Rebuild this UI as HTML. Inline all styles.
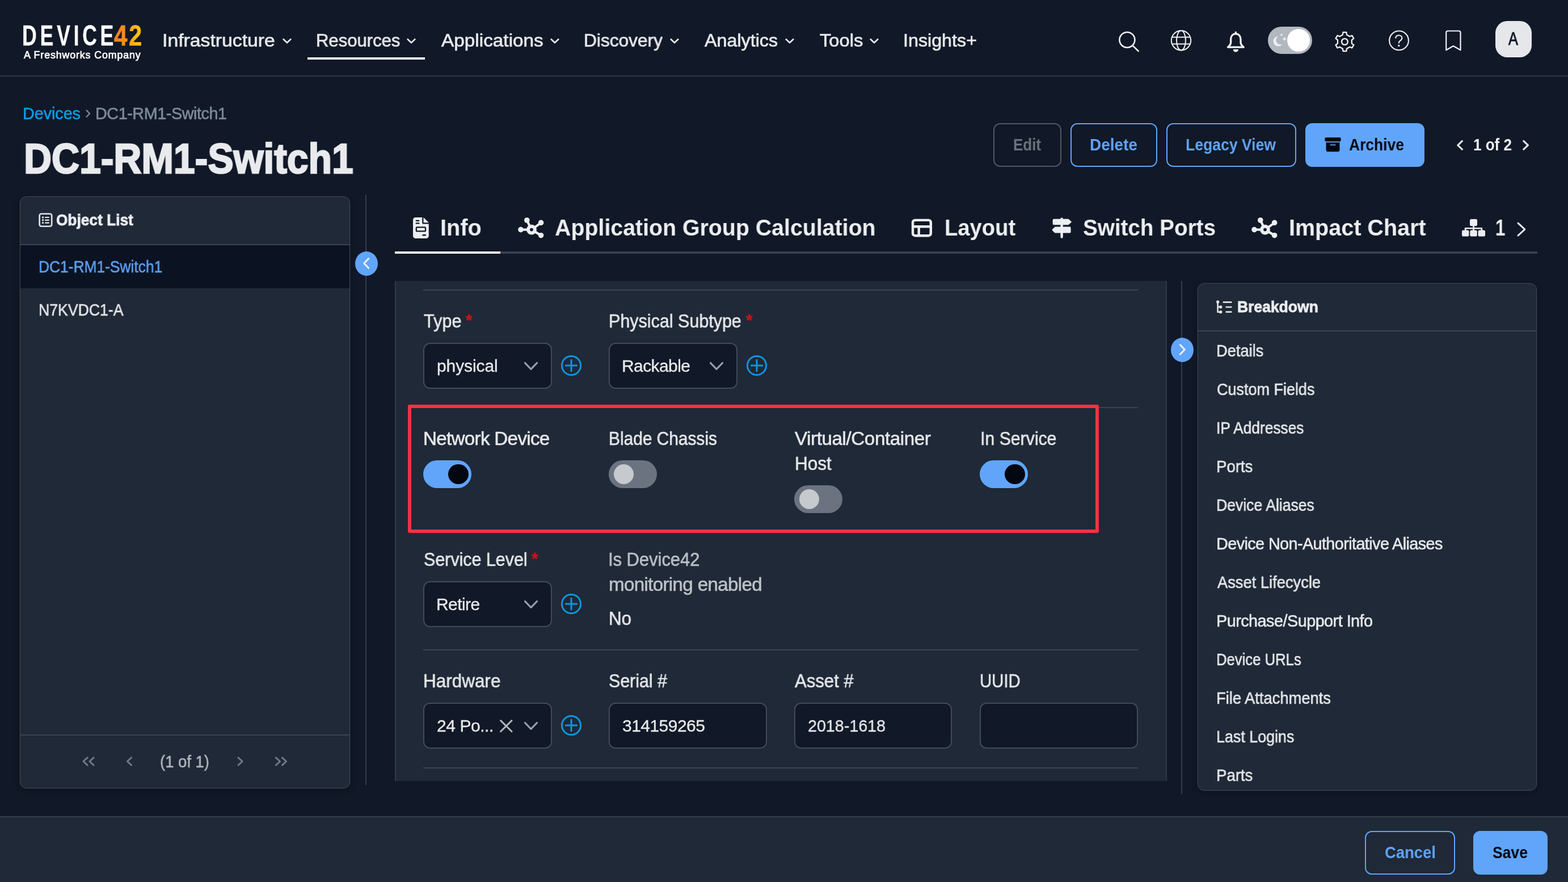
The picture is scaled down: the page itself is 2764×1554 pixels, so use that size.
<!DOCTYPE html>
<html lang="en"><head><meta charset="utf-8"><title>DC1-RM1-Switch1 - Device42</title>
<style>
html,body{margin:0;padding:0;background:#111827;}
body{width:2764px;height:1554px;position:relative;overflow:hidden;font-family:"Liberation Sans",sans-serif;color:#e1e3e6;}
body *{position:absolute;box-sizing:border-box;margin:0;padding:0;}
.t{white-space:nowrap;line-height:1;display:block;will-change:transform;}
svg{overflow:visible;}
.panel{background:#1f2937;border:1px solid #3a4453;border-radius:12px;box-shadow:0 0 0 1px rgba(55,65,81,.35),0 2px 8px 2px rgba(0,0,0,.25);}
button{font-family:inherit;font-size:inherit;color:inherit;cursor:pointer;}
.btn{border-radius:12px;border:2px solid #60a5fa;background:transparent;}
.inp{background:#111827;border:2px solid #424b57;border-radius:12px;}
.hr{height:2px;background:#3a4452;}
.sw{border-radius:25px;}
.sw i{border-radius:50%;}
</style></head><body>
<header style="left:0;top:0;width:2764px;height:135px;border-bottom:2px solid #2f3745;"><a class="logo" style="left:0;top:0;width:260px;height:120px;"><span class="t" style="left:38.99px;top:38.74px;font-size:49.60px;color:#ffffff;font-weight:700;transform:scaleX(0.7186);transform-origin:0 0;letter-spacing:8.00px;-webkit-text-stroke:0.30px #ffffff;">DEVICE</span><span class="t" style="left:200.80px;top:37.75px;font-size:50.00px;color:#f7931e;font-weight:700;transform:scaleX(0.8414);transform-origin:0 0;letter-spacing:3.00px;-webkit-text-stroke:0.40px #f7931e;-webkit-text-stroke:0.4px #f99d1c;background:linear-gradient(90deg,#f47c20 0%,#f7941d 45%,#fdb913 70%,#ffc90e 100%);-webkit-background-clip:text;background-clip:text;-webkit-text-fill-color:transparent;">42</span><span class="t" style="left:41.55px;top:88.91px;font-size:17.80px;color:#ffffff;letter-spacing:0.888px;-webkit-text-stroke:0.70px #ffffff;">A Freshworks Company</span></a><nav style="left:270px;top:0;width:1500px;height:133px;"></nav><a class="t" style="left:286.44px;top:54.61px;font-size:32.00px;color:#e6e8eb;transform:scaleX(1.0546);transform-origin:0 0;-webkit-text-stroke:0.70px #e6e8eb;">Infrastructure</a><svg style="left:495.5px;top:62px;" width="20" height="20" viewBox="-10 -10 20 20"><path d="M-6.3 -2.8L0 3.3L6.3 -2.8" fill="none" stroke="#e6e8eb" stroke-width="2.7" stroke-linecap="round" stroke-linejoin="round"/></svg><a class="t" style="left:556.91px;top:54.61px;font-size:32.00px;color:#e6e8eb;transform:scaleX(0.9700);transform-origin:0 0;-webkit-text-stroke:0.70px #e6e8eb;">Resources</a><svg style="left:715px;top:62px;" width="20" height="20" viewBox="-10 -10 20 20"><path d="M-6.3 -2.8L0 3.3L6.3 -2.8" fill="none" stroke="#e6e8eb" stroke-width="2.7" stroke-linecap="round" stroke-linejoin="round"/></svg><a class="t" style="left:777.65px;top:54.61px;font-size:32.00px;color:#e6e8eb;transform:scaleX(1.0420);transform-origin:0 0;-webkit-text-stroke:0.70px #e6e8eb;">Applications</a><svg style="left:968px;top:62px;" width="20" height="20" viewBox="-10 -10 20 20"><path d="M-6.3 -2.8L0 3.3L6.3 -2.8" fill="none" stroke="#e6e8eb" stroke-width="2.7" stroke-linecap="round" stroke-linejoin="round"/></svg><a class="t" style="left:1029.47px;top:54.61px;font-size:32.00px;color:#e6e8eb;transform:scaleX(0.9890);transform-origin:0 0;-webkit-text-stroke:0.70px #e6e8eb;">Discovery</a><svg style="left:1178.5px;top:62px;" width="20" height="20" viewBox="-10 -10 20 20"><path d="M-6.3 -2.8L0 3.3L6.3 -2.8" fill="none" stroke="#e6e8eb" stroke-width="2.7" stroke-linecap="round" stroke-linejoin="round"/></svg><a class="t" style="left:1241.85px;top:54.61px;font-size:32.00px;color:#e6e8eb;transform:scaleX(1.0079);transform-origin:0 0;-webkit-text-stroke:0.70px #e6e8eb;">Analytics</a><svg style="left:1381.5px;top:62px;" width="20" height="20" viewBox="-10 -10 20 20"><path d="M-6.3 -2.8L0 3.3L6.3 -2.8" fill="none" stroke="#e6e8eb" stroke-width="2.7" stroke-linecap="round" stroke-linejoin="round"/></svg><a class="t" style="left:1444.55px;top:54.61px;font-size:32.00px;color:#e6e8eb;transform:scaleX(1.0223);transform-origin:0 0;-webkit-text-stroke:0.70px #e6e8eb;">Tools</a><svg style="left:1530.7px;top:62px;" width="20" height="20" viewBox="-10 -10 20 20"><path d="M-6.3 -2.8L0 3.3L6.3 -2.8" fill="none" stroke="#e6e8eb" stroke-width="2.7" stroke-linecap="round" stroke-linejoin="round"/></svg><a class="t" style="left:1591.63px;top:54.61px;font-size:32.00px;color:#e6e8eb;transform:scaleX(1.0077);transform-origin:0 0;-webkit-text-stroke:0.70px #e6e8eb;">Insights+</a><div style="left:542px;top:100.5px;width:207px;height:4.5px;background:#f3f4f6;"></div><svg style="left:1968px;top:50px;" width="46" height="46" viewBox="1968 50 46 46"><g fill="none" stroke="#f1f2f4" stroke-linecap="round" stroke-linejoin="round" stroke-width="2.6"><circle cx="1986.9" cy="70.2" r="13.5"/><path d="M1996.6 80.4L2006.6 90"/></g></svg><svg style="left:2060px;top:50px;" width="46" height="46" viewBox="2060 50 46 46"><g fill="none" stroke="#f1f2f4" stroke-linecap="round" stroke-linejoin="round" stroke-width="2"><circle cx="2082" cy="71.3" r="17.2"/><ellipse cx="2082" cy="71.3" rx="8" ry="17.2"/><path d="M2066.2 65.4H2097.8M2066.2 77.4H2097.8"/></g></svg><svg style="left:2156px;top:50px;" width="46" height="46" viewBox="2156 50 46 46"><g fill="none" stroke="#f1f2f4" stroke-linecap="round" stroke-linejoin="round" stroke-width="3.3"><path d="M2178.3 59.600c-5.600 0-8.700 4.300-8.700 9.800v5.600c0 2.600-1.600 4.800-3.800 6.800l-1.400 1.400h27.800l-1.400-1.400c-2.200-2-3.800-4.200-3.800-6.800v-5.600c0-5.500-3.100-9.800-8.700-9.800z"/><path d="M2178.300 58.400v-1.600"/></g><path d="M2173.600 87h9.400a4.700 4.700 0 0 1-9.400 0z" fill="#f1f2f4"/></svg><div class="sw" style="left:2235px;top:47px;width:78.4px;height:48px;background:#b3b7bf;border-radius:24px;"><i style="left:34px;top:3.800px;width:40.400px;height:40.400px;background:#ffffff;"></i><svg style="left:5px;top:9px;" width="30" height="30" viewBox="0 0 30 30"><path d="M13.200 8a8.800 8.800 0 1 0 7.600 13.400a7.600 7.600 0 0 1-7.600-13.400z" fill="#eceef1"/><path d="M19 2.600l.9 2 2 .9-2 .9-.9 2-.9-2-2-.9 2-.9z M24.200 8.400l1.200 2.900 2.900 1.200-2.900 1.200-1.200 2.900-1.200-2.900-2.900-1.200 2.900-1.200z" fill="#eceef1"/></svg></div><svg style="left:2348px;top:50px;" width="46" height="46" viewBox="2348 50 46 46"><g fill="none" stroke="#f1f2f4" stroke-linecap="round" stroke-linejoin="round" stroke-width="2.3"><path d="M2366.83 61.21L2367.41 56.87L2373.39 56.87L2373.97 61.21L2379.26 64.26L2383.31 62.59L2386.30 67.78L2382.83 70.45L2382.83 76.55L2386.30 79.22L2383.31 84.41L2379.26 82.74L2373.97 85.79L2373.39 90.13L2367.41 90.13L2366.83 85.79L2361.54 82.74L2357.49 84.41L2354.50 79.22L2357.97 76.55L2357.97 70.45L2354.50 67.78L2357.49 62.59L2361.54 64.26Z" stroke-linejoin="round"/><circle cx="2370.4" cy="73.5" r="5.400"/></g></svg><svg style="left:2443px;top:50px;" width="46" height="46" viewBox="2443 50 46 46"><g fill="none" stroke="#f1f2f4" stroke-linecap="round" stroke-linejoin="round" stroke-width="2.1"><circle cx="2466" cy="71.400" r="16.900"/><path d="M2460.200 66.800c.4-3 2.600-4.600 5.600-4.600 3.200 0 5.600 1.900 5.600 4.800 0 2.600-1.700 3.700-3.400 4.800-1.500 1-2.200 1.900-2.200 3.900"/></g><circle cx="2465.800" cy="80.400" r="1.700" fill="#f1f2f4"/></svg><svg style="left:2540px;top:50px;" width="46" height="46" viewBox="2540 50 46 46"><path d="M2549.200 57.500a3 3 0 0 1 3-3h19.300a3 3 0 0 1 3 3v30.800l-12.700-7.300-12.600 7.300z" fill="none" stroke="#f1f2f4" stroke-linecap="round" stroke-linejoin="round" stroke-width="2.2"/></svg><div style="left:2635.8px;top:37px;width:64.4px;height:64.2px;border-radius:21px;background:#e5e7eb;"><span class="t" style="left:22.90px;top:16.00px;font-size:31.60px;color:#111827;transform:scaleX(0.8000);transform-origin:0 0;-webkit-text-stroke:1.00px #111827;">A</span></div></header><main style="left:0;top:135px;width:2764px;height:1303px;"></main><a class="t" style="left:39.90px;top:185.56px;font-size:28.80px;color:#0f9ae3;letter-spacing:-0.070px;-webkit-text-stroke:0.60px #0f9ae3;">Devices</a><svg style="left:150px;top:188px;" width="12" height="24" viewBox="150 188 12 24"><path d="M152.600 194.400l5.400 5.700-5.400 5.700" fill="none" stroke="#7b8a98" stroke-width="2.3" stroke-linecap="round" stroke-linejoin="round"/></svg><span class="t" style="left:168.10px;top:185.56px;font-size:28.80px;color:#7c8b99;letter-spacing:-0.457px;-webkit-text-stroke:0.60px #7c8b99;">DC1-RM1-Switch1</span><h1 class="t" style="left:42.11px;top:241.91px;font-size:74.60px;color:#e8eaed;font-weight:700;transform:scaleX(0.9099);transform-origin:0 0;-webkit-text-stroke:2.50px #e8eaed;">DC1-RM1-Switch1</h1><button class="btn" style="left:1751px;top:217px;width:119.8px;height:76.8px;border-color:#4f5764;background:transparent;"><span class="t" style="left:33.01px;top:21.04px;font-size:29.30px;color:#6c737f;font-weight:700;transform:scaleX(0.8859);transform-origin:0 0;">Edit</span></button><button class="btn" style="left:1887px;top:217px;width:152.8px;height:76.8px;border-color:#60a5fa;background:transparent;"><span class="t" style="left:32.05px;top:21.04px;font-size:29.30px;color:#60a5fa;font-weight:700;transform:scaleX(0.9528);transform-origin:0 0;">Delete</span></button><button class="btn" style="left:2056px;top:217px;width:228.8px;height:76.8px;border-color:#60a5fa;background:transparent;"><span class="t" style="left:32.29px;top:21.04px;font-size:29.30px;color:#60a5fa;font-weight:700;transform:scaleX(0.9066);transform-origin:0 0;">Legacy View</span></button><button class="btn" style="left:2301px;top:217px;width:210.0px;height:76.8px;border-color:#60a5fa;background:#60a5fa;"><svg style="left:32.400px;top:21.400px;" width="29.200" height="29.200" viewBox="0 0 30 30"><path d="M2.200 2.400h25.400a1.800 1.800 0 0 1 1.800 1.800v3.600a1.800 1.800 0 0 1-1.800 1.800h-25.400a1.800 1.800 0 0 1-1.800-1.800v-3.600a1.800 1.800 0 0 1 1.800-1.800z M2.600 11.400h24.600v13.200a3.400 3.400 0 0 1-3.400 3.400h-17.800a3.400 3.400 0 0 1-3.400-3.400z M10.600 14.800a1 1 0 0 0 0 2h8.600a1 1 0 0 0 0-2z" fill="#030712" fill-rule="evenodd"/></svg><span class="t" style="left:75.40px;top:21.04px;font-size:29.30px;color:#030712;font-weight:700;transform:scaleX(0.9013);transform-origin:0 0;">Archive</span></button><svg style="left:2560px;top:240px;" width="30" height="32" viewBox="2560 240 30 32"><path d="M2577.400 248.500l-7.600 7.300 7.600 7.300" fill="none" stroke="#e1e3e6" stroke-width="3.2" stroke-linecap="round" stroke-linejoin="round"/></svg><span class="t" style="left:2596.91px;top:240.04px;font-size:29.30px;color:#f1f2f4;font-weight:700;transform:scaleX(0.8880);transform-origin:0 0;">1 of 2</span><svg style="left:2675px;top:240px;" width="30" height="32" viewBox="2675 240 30 32"><path d="M2685.800 248.500l7.600 7.300-7.600 7.300" fill="none" stroke="#e1e3e6" stroke-width="3.2" stroke-linecap="round" stroke-linejoin="round"/></svg><aside class="panel" style="left:35px;top:346px;width:582px;height:1043px;overflow:hidden;"><svg style="left:32px;top:27.500px;" width="26" height="27" viewBox="0 0 26 27"><rect x="1.600" y="1.700" width="21.600" height="22" rx="3.200" fill="none" stroke="#e3e4e7" stroke-width="2.600"/><g fill="#e3e4e7"><circle cx="7.600" cy="8" r="1.700"/><circle cx="7.600" cy="12.800" r="1.700"/><circle cx="7.600" cy="17.600" r="1.700"/><rect x="11" y="6.900" width="8" height="2.200" rx="1.100"/><rect x="11" y="11.700" width="8" height="2.200" rx="1.100"/><rect x="11" y="16.500" width="8" height="2.200" rx="1.100"/></g></svg><h2 class="t" style="left:63.37px;top:26.10px;font-size:28.40px;color:#eceef1;font-weight:700;transform:scaleX(0.9258);transform-origin:0 0;-webkit-text-stroke:0.80px #eceef1;">Object List</h2><div class="hr" style="left:0;top:83px;width:582px;background:#394351;"></div><div style="left:0;top:85px;width:582px;height:76px;background:#0b1323;"></div><a class="t" style="left:32.47px;top:108.86px;font-size:28.80px;color:#5c9eee;transform:scaleX(0.9150);transform-origin:0 0;-webkit-text-stroke:0.60px #5c9eee;">DC1-RM1-Switch1</a><a class="t" style="left:32.45px;top:184.66px;font-size:28.80px;color:#e3e4e7;transform:scaleX(0.9251);transform-origin:0 0;-webkit-text-stroke:0.60px #e3e4e7;">N7KVDC1-A</a><div class="hr" style="left:0;top:947px;width:582px;background:#394351;"></div><svg style="left:0;top:960px;" width="582" height="70" viewBox="36 1307.500 582 70"><path d="M154.1 1335.4l-7.2 6.6l7.2 6.6" fill="none" stroke="#717987" stroke-width="3.0" stroke-linecap="round" stroke-linejoin="round"/><path d="M165.1 1335.4l-7.2 6.6l7.2 6.6" fill="none" stroke="#717987" stroke-width="3.0" stroke-linecap="round" stroke-linejoin="round"/><path d="M231.6 1335.4l-7.2 6.6l7.2 6.6" fill="none" stroke="#717987" stroke-width="3.0" stroke-linecap="round" stroke-linejoin="round"/><path d="M420.0 1335.4l7.2 6.6l-7.2 6.6" fill="none" stroke="#717987" stroke-width="3.0" stroke-linecap="round" stroke-linejoin="round"/><path d="M486.4 1335.4l7.2 6.6l-7.2 6.6" fill="none" stroke="#717987" stroke-width="3.0" stroke-linecap="round" stroke-linejoin="round"/><path d="M497.4 1335.4l7.2 6.6l-7.2 6.6" fill="none" stroke="#717987" stroke-width="3.0" stroke-linecap="round" stroke-linejoin="round"/></svg><span class="t" style="left:245.74px;top:979.70px;font-size:30.00px;color:#b3b8bf;transform:scaleX(0.9146);transform-origin:0 0;-webkit-text-stroke:0.50px #b3b8bf;">(1 of 1)</span></aside><div style="left:644px;top:343px;width:2px;height:1040px;background:#333d4b;"></div><button style="left:626px;top:443px;width:40px;height:43px;border-radius:50%;background:#60a5fa;border:0;"><svg style="left:0;top:0;" width="40" height="43" viewBox="0 0 40 43"><path d="M23.700 12.600l-8 8.300 8 8.300" fill="none" stroke="#eceff3" stroke-width="3" stroke-linecap="round" stroke-linejoin="round"/></svg></button><div style="left:695.8px;top:443px;width:2014px;height:4px;background:#394250;"></div><div style="left:695.8px;top:443px;width:186.2px;height:4px;background:#f3f4f6;"></div><a class="t" style="left:776.45px;top:380.72px;font-size:40.80px;color:#eceef1;font-weight:700;transform:scaleX(0.9744);transform-origin:0 0;">Info</a><a class="t" style="left:978.04px;top:380.72px;font-size:40.80px;color:#eceef1;font-weight:700;transform:scaleX(0.9635);transform-origin:0 0;">Application Group Calculation</a><a class="t" style="left:1664.93px;top:380.72px;font-size:40.80px;color:#eceef1;font-weight:700;transform:scaleX(0.9354);transform-origin:0 0;">Layout</a><a class="t" style="left:1908.85px;top:380.72px;font-size:40.80px;color:#eceef1;font-weight:700;transform:scaleX(0.9470);transform-origin:0 0;">Switch Ports</a><a class="t" style="left:2272.06px;top:380.72px;font-size:40.80px;color:#eceef1;font-weight:700;transform:scaleX(0.9690);transform-origin:0 0;">Impact Chart</a><a class="t" style="left:2636.27px;top:380.72px;font-size:40.80px;color:#eceef1;font-weight:700;transform:scaleX(0.7650);transform-origin:0 0;">1</a><svg style="left:727.6px;top:383px;" width="27.8" height="37" viewBox="0 0 384 512"><path fill="#eceef1" fill-rule="evenodd" d="M64 0C28.700 0 0 28.700 0 64V448c0 35.300 28.700 64 64 64H320c35.300 0 64-28.700 64-64V160H256c-17.700 0-32-14.300-32-32V0H64zM256 0V128H384L256 0zM80 64h64c8.800 0 16 7.200 16 16s-7.200 16-16 16H80c-8.800 0-16-7.200-16-16s7.200-16 16-16zm0 64h64c8.800 0 16 7.200 16 16s-7.200 16-16 16H80c-8.800 0-16-7.200-16-16s7.200-16 16-16zm16 96H288c17.700 0 32 14.300 32 32v64c0 17.700-14.300 32-32 32H96c-17.700 0-32-14.300-32-32V256c0-17.700 14.300-32 32-32zm0 32v64H288V256H96zM240 416h64c8.800 0 16 7.200 16 16s-7.200 16-16 16H240c-8.800 0-16-7.200-16-16s7.200-16 16-16z"/></svg><svg style="left:913.2px;top:383.2px;" width="46" height="37" viewBox="0 0 46 37"><g stroke="#eceef1" stroke-width="4.200" stroke-linecap="round" fill="none"><path d="M24 21.600L15.800 5.200M24 21.600L40.500 9.600M24 21.600H5M24 21.600L40.500 31.600"/></g><circle cx="24" cy="21.600" r="5.900" fill="#111827" stroke="#eceef1" stroke-width="6"/><g fill="#eceef1"><circle cx="15.800" cy="5" r="4.800"/><circle cx="40.600" cy="9.400" r="4.800"/><circle cx="5" cy="21.600" r="4.800"/><circle cx="40.600" cy="31.700" r="4.800"/></g></svg><svg style="left:2205.6px;top:383.2px;" width="46" height="37" viewBox="0 0 46 37"><g stroke="#eceef1" stroke-width="4.200" stroke-linecap="round" fill="none"><path d="M24 21.600L15.800 5.200M24 21.600L40.500 9.600M24 21.600H5M24 21.600L40.500 31.600"/></g><circle cx="24" cy="21.600" r="5.900" fill="#111827" stroke="#eceef1" stroke-width="6"/><g fill="#eceef1"><circle cx="15.800" cy="5" r="4.800"/><circle cx="40.600" cy="9.400" r="4.800"/><circle cx="5" cy="21.600" r="4.800"/><circle cx="40.600" cy="31.700" r="4.800"/></g></svg><svg style="left:1606px;top:385px;" width="38" height="33" viewBox="1606 385 38 33"><g fill="none" stroke="#eceef1" stroke-width="4.400"><rect x="1609" y="387.900" width="31.800" height="27.300" rx="4"/><path d="M1609 399.200H1640.800M1619.700 399.200V415"/></g></svg><svg style="left:1853px;top:383px;" width="37" height="38" viewBox="1853 383 37 38"><g fill="#eceef1"><rect x="1869.400" y="383.500" width="4.400" height="36.200" rx="2.200"/><path d="M1857.800 385.800h25a2 2 0 0 1 1.400.6l4 3.600a1.400 1.400 0 0 1 0 2l-4 3.600a2 2 0 0 1-1.400.6h-25a2.200 2.200 0 0 1-2.200-2.200v-6a2.200 2.200 0 0 1 2.200-2.200z"/><path d="M1885.400 399.600h-25a2 2 0 0 0-1.400.6l-4 3.900a1.400 1.400 0 0 0 0 2l4 3.900a2 2 0 0 0 1.400.6h25a2.200 2.200 0 0 0 2.200-2.200v-6.600a2.200 2.200 0 0 0-2.200-2.200z"/></g></svg><svg style="left:2576px;top:385px;" width="43" height="33" viewBox="2576 385 43 33"><g fill="#eceef1"><rect x="2591" y="386" width="13" height="12.200" rx="2.600"/><rect x="2577" y="405.400" width="12.400" height="11.200" rx="2.600"/><rect x="2591.300" y="405.400" width="12.400" height="11.200" rx="2.600"/><rect x="2605.600" y="405.400" width="12.400" height="11.200" rx="2.600"/></g><path d="M2597.500 398v8M2583.200 406.500v-4.300h28.600v4.300" fill="none" stroke="#eceef1" stroke-width="2.600"/></svg><svg style="left:2670px;top:388px;" width="24" height="32" viewBox="2670 388 24 32"><path d="M2676 393.200l11.800 10.900-11.800 10.900" fill="none" stroke="#eceef1" stroke-width="3" stroke-linecap="round" stroke-linejoin="round"/></svg><section style="left:696px;top:495px;width:1360.500px;height:881px;background:#1f2937;border-left:2px solid #313a48;border-right:2px solid #2d3644;overflow:hidden;"><div class="hr" style="left:48.25px;top:14.600000000000023px;width:1259.75px;"></div><label class="t" style="left:48.50px;top:54.15px;font-size:33.20px;color:#e6e7ea;transform:scaleX(0.9249);transform-origin:0 0;-webkit-text-stroke:0.60px #e6e7ea;">Type</label><span class="t" style="left:123.25px;top:54.12px;font-size:29.50px;color:#cb1218;font-weight:700;-webkit-text-stroke:0.50px #cb1218;">*</span><div class="inp" style="left:48px;top:109px;width:227.0px;height:81.0px;"><span class="t" style="left:22.35px;top:24.10px;font-size:30.00px;color:#e9eaec;letter-spacing:-0.103px;-webkit-text-stroke:0.30px #e9eaec;">physical</span><svg style="left:172.2px;top:27.3px;" width="32" height="24" viewBox="-4 -12 32 24"><path d="M1.400 -5.600L12 5.400L22.600 -5.600" fill="none" stroke="#9aa1ab" stroke-width="3" stroke-linecap="round" stroke-linejoin="round"/></svg></div><svg style="left:289px;top:129px;" width="40" height="40" viewBox="-20 -20 40 40"><circle r="16.600" fill="none" stroke="#0e96e0" stroke-width="3"/><path d="M-9.800 0H9.800M0 -9.800V9.800" stroke="#0e96e0" stroke-width="3" stroke-linecap="round"/></svg><label class="t" style="left:375.16px;top:54.15px;font-size:33.20px;color:#e6e7ea;transform:scaleX(0.9187);transform-origin:0 0;-webkit-text-stroke:0.60px #e6e7ea;">Physical Subtype</label><span class="t" style="left:616.55px;top:54.12px;font-size:29.50px;color:#cb1218;font-weight:700;-webkit-text-stroke:0.50px #cb1218;">*</span><div class="inp" style="left:375px;top:109px;width:227.0px;height:81.0px;"><span class="t" style="left:20.95px;top:24.10px;font-size:30.00px;color:#e9eaec;letter-spacing:-0.598px;-webkit-text-stroke:0.30px #e9eaec;">Rackable</span><svg style="left:172.2px;top:27.3px;" width="32" height="24" viewBox="-4 -12 32 24"><path d="M1.400 -5.600L12 5.400L22.600 -5.600" fill="none" stroke="#9aa1ab" stroke-width="3" stroke-linecap="round" stroke-linejoin="round"/></svg></div><svg style="left:616px;top:129px;" width="40" height="40" viewBox="-20 -20 40 40"><circle r="16.600" fill="none" stroke="#0e96e0" stroke-width="3"/><path d="M-9.800 0H9.800M0 -9.800V9.800" stroke="#0e96e0" stroke-width="3" stroke-linecap="round"/></svg><div class="hr" style="left:48.25px;top:222px;width:1259.75px;"></div><div style="left:21px;top:218px;width:1218px;height:226px;border:6px solid #f03343;border-radius:3px;"></div><label class="t" style="left:47.55px;top:261.45px;font-size:33.20px;color:#e6e7ea;letter-spacing:-0.698px;-webkit-text-stroke:0.60px #e6e7ea;">Network Device</label><div class="sw" style="left:48px;top:316px;width:84.600px;height:49.400px;background:#60a5fa;"><i style="left:44.200px;top:7px;width:35.400px;height:35.400px;background:#030712;"></i></div><label class="t" style="left:375.20px;top:261.45px;font-size:33.20px;color:#e6e7ea;transform:scaleX(0.9001);transform-origin:0 0;-webkit-text-stroke:0.60px #e6e7ea;">Blade Chassis</label><div class="sw" style="left:375px;top:316px;width:84.600px;height:49.400px;background:#6b7280;"><i style="left:8.800px;top:7px;width:35.400px;height:35.400px;background:#c6c9ce;"></i></div><label class="t" style="left:703.00px;top:261.45px;font-size:33.20px;color:#e6e7ea;letter-spacing:-0.421px;-webkit-text-stroke:0.60px #e6e7ea;">Virtual/Container</label><label class="t" style="left:702.70px;top:305.45px;font-size:33.20px;color:#e6e7ea;transform:scaleX(0.9482);transform-origin:0 0;-webkit-text-stroke:0.60px #e6e7ea;">Host</label><div class="sw" style="left:702px;top:360px;width:84.600px;height:49.400px;background:#6b7280;"><i style="left:8.800px;top:7px;width:35.400px;height:35.400px;background:#c6c9ce;"></i></div><label class="t" style="left:1029.57px;top:261.45px;font-size:33.20px;color:#e6e7ea;transform:scaleX(0.9112);transform-origin:0 0;-webkit-text-stroke:0.60px #e6e7ea;">In Service</label><div class="sw" style="left:1029px;top:316px;width:84.600px;height:49.400px;background:#60a5fa;"><i style="left:44.200px;top:7px;width:35.400px;height:35.400px;background:#030712;"></i></div><label class="t" style="left:48.63px;top:473.85px;font-size:33.20px;color:#e6e7ea;transform:scaleX(0.9167);transform-origin:0 0;-webkit-text-stroke:0.60px #e6e7ea;">Service Level</label><span class="t" style="left:238.65px;top:473.82px;font-size:29.50px;color:#cb1218;font-weight:700;-webkit-text-stroke:0.50px #cb1218;">*</span><div class="inp" style="left:48px;top:529px;width:227.0px;height:81.0px;"><span class="t" style="left:21.35px;top:23.80px;font-size:30.00px;color:#e9eaec;letter-spacing:-0.588px;-webkit-text-stroke:0.30px #e9eaec;">Retire</span><svg style="left:172.2px;top:27.3px;" width="32" height="24" viewBox="-4 -12 32 24"><path d="M1.400 -5.600L12 5.400L22.600 -5.600" fill="none" stroke="#9aa1ab" stroke-width="3" stroke-linecap="round" stroke-linejoin="round"/></svg></div><svg style="left:289px;top:549px;" width="40" height="40" viewBox="-20 -20 40 40"><circle r="16.600" fill="none" stroke="#0e96e0" stroke-width="3"/><path d="M-9.800 0H9.800M0 -9.800V9.800" stroke="#0e96e0" stroke-width="3" stroke-linecap="round"/></svg><label class="t" style="left:374.21px;top:473.85px;font-size:33.20px;color:#bdc1c7;transform:scaleX(0.9305);transform-origin:0 0;-webkit-text-stroke:0.60px #bdc1c7;">Is Device42</label><label class="t" style="left:375.00px;top:518.05px;font-size:33.20px;color:#bdc1c7;letter-spacing:-0.684px;-webkit-text-stroke:0.60px #bdc1c7;">monitoring enabled</label><label class="t" style="left:375.11px;top:578.05px;font-size:33.20px;color:#e6e7ea;transform:scaleX(0.9433);transform-origin:0 0;-webkit-text-stroke:0.60px #e6e7ea;">No</label><div class="hr" style="left:48.25px;top:649px;width:1259.75px;"></div><label class="t" style="left:47.65px;top:688.25px;font-size:33.20px;color:#e6e7ea;transform:scaleX(0.9483);transform-origin:0 0;-webkit-text-stroke:0.60px #e6e7ea;">Hardware</label><div class="inp" style="left:48px;top:743px;width:227.0px;height:81.0px;"><span class="t" style="left:22.35px;top:23.70px;font-size:30.00px;color:#e9eaec;letter-spacing:-0.438px;-webkit-text-stroke:0.30px #e9eaec;">24 Po...</span><svg style="left:172.2px;top:27.3px;" width="32" height="24" viewBox="-4 -12 32 24"><path d="M1.400 -5.600L12 5.400L22.600 -5.600" fill="none" stroke="#9aa1ab" stroke-width="3" stroke-linecap="round" stroke-linejoin="round"/></svg><svg style="left:131.0px;top:26.3px;" width="28" height="26" viewBox="-2 -13 28 26"><path d="M1.600 -9.400L21 9.800M21 -9.400L1.600 9.800" fill="none" stroke="#b3b8c0" stroke-width="2.900" stroke-linecap="round"/></svg></div><svg style="left:289px;top:763px;" width="40" height="40" viewBox="-20 -20 40 40"><circle r="16.600" fill="none" stroke="#0e96e0" stroke-width="3"/><path d="M-9.800 0H9.800M0 -9.800V9.800" stroke="#0e96e0" stroke-width="3" stroke-linecap="round"/></svg><label class="t" style="left:374.68px;top:688.25px;font-size:33.20px;color:#e6e7ea;transform:scaleX(0.9155);transform-origin:0 0;-webkit-text-stroke:0.60px #e6e7ea;">Serial #</label><div class="inp" style="left:375px;top:743px;width:279.0px;height:81.0px;"><span class="t" style="left:22.15px;top:23.70px;font-size:30.00px;color:#e9eaec;letter-spacing:-0.535px;-webkit-text-stroke:0.30px #e9eaec;">314159265</span></div><label class="t" style="left:703.00px;top:688.25px;font-size:33.20px;color:#e6e7ea;transform:scaleX(0.9369);transform-origin:0 0;-webkit-text-stroke:0.60px #e6e7ea;">Asset #</label><div class="inp" style="left:702px;top:743px;width:278.0px;height:81.0px;"><span class="t" style="left:22.00px;top:23.70px;font-size:30.00px;color:#e9eaec;transform:scaleX(0.9550);transform-origin:0 0;-webkit-text-stroke:0.30px #e9eaec;">2018-1618</span></div><label class="t" style="left:1028.54px;top:688.25px;font-size:33.20px;color:#e6e7ea;transform:scaleX(0.8816);transform-origin:0 0;-webkit-text-stroke:0.60px #e6e7ea;">UUID</label><div class="inp" style="left:1029px;top:743px;width:279.0px;height:81.0px;"></div><div class="hr" style="left:48.25px;top:856.5999999999999px;width:1259.75px;"></div></section><div style="left:2082.200px;top:495px;width:2px;height:904px;background:#333d4b;"></div><button style="left:2064px;top:595px;width:40px;height:43px;border-radius:50%;background:#60a5fa;border:0;"><svg style="left:0;top:0;" width="40" height="43" viewBox="0 0 40 43"><path d="M16.300 12.600l8 8.300-8 8.300" fill="none" stroke="#eceff3" stroke-width="3" stroke-linecap="round" stroke-linejoin="round"/></svg></button><aside class="panel" style="left:2111px;top:499px;width:598px;height:894px;overflow:hidden;"><svg style="left:32.0px;top:28.5px;" width="29" height="24" viewBox="0 0 29 24"><g fill="none" stroke="#e3e4e7" stroke-width="2.600" stroke-linecap="round"><path d="M2.600 2.600V20.800H7.600M2.600 11.800H7.600"/><path d="M12.800 3.400H26.400M17.600 12H26.400M17.600 20.600H26.400"/></g><g fill="#e3e4e7"><rect x="0.200" y="0.400" width="5" height="5" rx="1.400"/><rect x="5.200" y="9.400" width="5" height="5" rx="1.400"/><rect x="5.200" y="18.200" width="5" height="5" rx="1.400"/></g></svg><h2 class="t" style="left:68.66px;top:25.97px;font-size:28.20px;color:#eceef1;font-weight:700;transform:scaleX(0.9398);transform-origin:0 0;-webkit-text-stroke:0.80px #eceef1;">Breakdown</h2><div class="hr" style="left:0;top:82.29999999999995px;width:598px;background:#394351;"></div><a class="t" style="left:31.71px;top:104.16px;font-size:28.80px;color:#e6e7ea;transform:scaleX(0.9472);transform-origin:0 0;-webkit-text-stroke:0.60px #e6e7ea;">Details</a><a class="t" style="left:32.66px;top:172.12px;font-size:28.80px;color:#e6e7ea;transform:scaleX(0.9369);transform-origin:0 0;-webkit-text-stroke:0.60px #e6e7ea;">Custom Fields</a><a class="t" style="left:31.77px;top:240.07px;font-size:28.80px;color:#e6e7ea;transform:scaleX(0.9126);transform-origin:0 0;-webkit-text-stroke:0.60px #e6e7ea;">IP Addresses</a><a class="t" style="left:31.68px;top:308.03px;font-size:28.80px;color:#e6e7ea;transform:scaleX(0.9581);transform-origin:0 0;-webkit-text-stroke:0.60px #e6e7ea;">Ports</a><a class="t" style="left:31.75px;top:375.98px;font-size:28.80px;color:#e6e7ea;transform:scaleX(0.9230);transform-origin:0 0;-webkit-text-stroke:0.60px #e6e7ea;">Device Aliases</a><a class="t" style="left:31.60px;top:443.94px;font-size:28.80px;color:#e6e7ea;letter-spacing:-0.592px;-webkit-text-stroke:0.60px #e6e7ea;">Device Non-Authoritative Aliases</a><a class="t" style="left:33.60px;top:511.89px;font-size:28.80px;color:#e6e7ea;transform:scaleX(0.9480);transform-origin:0 0;-webkit-text-stroke:0.60px #e6e7ea;">Asset Lifecycle</a><a class="t" style="left:31.60px;top:579.85px;font-size:28.80px;color:#e6e7ea;letter-spacing:-0.522px;-webkit-text-stroke:0.60px #e6e7ea;">Purchase/Support Info</a><a class="t" style="left:31.82px;top:647.80px;font-size:28.80px;color:#e6e7ea;transform:scaleX(0.8911);transform-origin:0 0;-webkit-text-stroke:0.60px #e6e7ea;">Device URLs</a><a class="t" style="left:31.70px;top:715.75px;font-size:28.80px;color:#e6e7ea;transform:scaleX(0.9483);transform-origin:0 0;-webkit-text-stroke:0.60px #e6e7ea;">File Attachments</a><a class="t" style="left:31.74px;top:783.71px;font-size:28.80px;color:#e6e7ea;transform:scaleX(0.9324);transform-origin:0 0;-webkit-text-stroke:0.60px #e6e7ea;">Last Logins</a><a class="t" style="left:31.68px;top:851.66px;font-size:28.80px;color:#e6e7ea;transform:scaleX(0.9581);transform-origin:0 0;-webkit-text-stroke:0.60px #e6e7ea;">Parts</a></aside><footer style="left:0;top:1438px;width:2764px;height:116px;background:#1f2937;border-top:2px solid #333d4b;"><button class="btn" style="left:2406px;top:24.299999999999955px;width:158.500px;height:76.400px;"><span class="t" style="left:32.86px;top:20.74px;font-size:29.30px;color:#60a5fa;font-weight:700;transform:scaleX(0.9352);transform-origin:0 0;">Cancel</span></button><button class="btn" style="left:2597px;top:24.299999999999955px;width:130.600px;height:76.400px;background:#60a5fa;"><span class="t" style="left:32.00px;top:20.74px;font-size:29.30px;color:#030712;font-weight:700;transform:scaleX(0.9042);transform-origin:0 0;">Save</span></button></footer></body></html>
